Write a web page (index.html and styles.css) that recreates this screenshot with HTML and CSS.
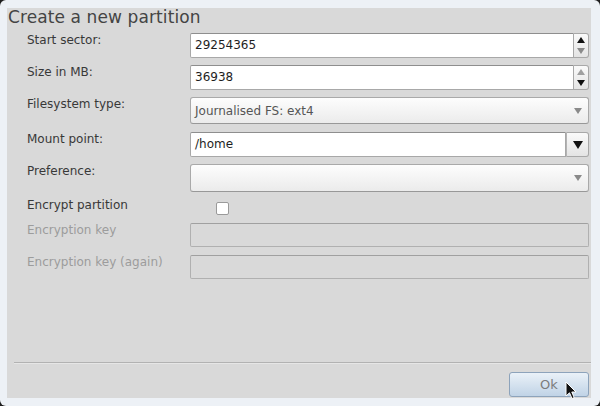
FILE: index.html
```html
<!DOCTYPE HTML>
<html lang="en">
<head>
    <meta charset="UTF-8">
    <link rel="stylesheet" href="styles.css">
    <title>Create a new partition</title>
</head>
<body>
<div class="window">
    <div class="panel">
        <h1 class="title">Create a new partition</h1>
        <div class="form">
            <div class="row">
                <label>Start sector:</label>
                <div class="field spin">
                    <span class="entry">29254365</span>
                    <span class="spinner">
                        <i class="up"></i>
                        <i class="down off"></i>
                    </span>
                </div>
            </div>
            <div class="row">
                <label>Size in MB:</label>
                <div class="field spin">
                    <span class="entry">36938</span>
                    <span class="spinner">
                        <i class="up off"></i>
                        <i class="down"></i>
                    </span>
                </div>
            </div>
            <div class="row tall">
                <label>Filesystem type:</label>
                <div class="field combo">
                    <span class="value">Journalised FS: ext4</span>
                    <i class="down off"></i>
                </div>
            </div>
            <div class="row">
                <label>Mount point:</label>
                <div class="field spin">
                    <span class="entry">/home</span>
                    <span class="drop"><i class="down big"></i></span>
                </div>
            </div>
            <div class="row taller">
                <label>Preference:</label>
                <div class="field combo">
                    <span class="value"></span>
                    <i class="down off"></i>
                </div>
            </div>
            <div class="row check">
                <label>Encrypt partition</label>
                <div><span class="checkbox"></span></div>
            </div>
            <div class="row disabled">
                <label>Encryption key</label>
                <div class="field blank"></div>
            </div>
            <div class="row disabled">
                <label>Encryption key (again)</label>
                <div class="field blank"></div>
            </div>
        </div>
        <div class="footer">
            <div class="separator"></div>
            <div class="buttons">
                <button class="ok">Ok</button>
            </div>
        </div>
    </div>
    <svg class="cursor" width="13" height="20" viewBox="0 0 13 20">
        <path d="M1 1 L1 15 L4.5 11.8 L7 17.5 L9.2 16.6 L6.8 11 L11 11 Z" fill="#111" stroke="#fff" stroke-width="1"/>
    </svg>
</div>
</body>
</html>
```

FILE: styles.css
```css
* {
    box-sizing: border-box;
}

body {
    margin: 0;
    background: #1e1e1e;
    font-family: "DejaVu Sans", sans-serif;
}

.window {
    position: relative;
    width: 600px;
    height: 406px;
    padding: 8px 9px 8px 7px;
    background: #edf1f6;
    border-radius: 6px;
}

.panel {
    display: flex;
    flex-direction: column;
    height: 390px;
    padding: 0 2px 1px 1px;
    background: #d9d9d9;
}

.title {
    margin: 0;
    font-size: 17px;
    font-weight: normal;
    line-height: 19px;
    letter-spacing: 0.1px;
    color: #444;
}

.form {
    display: flex;
    flex-direction: column;
    gap: 8px;
    margin-top: 6px;
    padding-left: 19px;
}

.row {
    display: grid;
    grid-template-columns: 163px 399px;
    height: 24px;
}

.row.tall {
    height: 27px;
}

.row.taller {
    height: 28px;
}

.row.check {
    height: 15px;
}

label {
    font-size: 12px;
    line-height: 15px;
    color: #383838;
}

.row.check label {
    margin-top: -2px;
}

.row.disabled label {
    color: #9c9c9c;
}

.field {
    display: flex;
    align-items: center;
    height: 100%;
    font-size: 12px;
    color: #1e1e1e;
}

.entry {
    flex: 1;
    height: 100%;
    padding: 4px 4px;
    line-height: 15px;
    background: #fff;
    border: 1px solid #a8a8a8;
    border-top-color: #8e8e8e;
    border-radius: 2px 0 0 2px;
}

.spinner, .drop {
    display: flex;
    flex-direction: column;
    align-items: center;
    justify-content: center;
    gap: 5px;
    width: 15px;
    height: 100%;
    background: linear-gradient(#fafafa, #e4e4e4);
    border: 1px solid #a8a8a8;
    border-left: none;
    border-radius: 0 3px 3px 0;
}

.drop {
    width: 23px;
    border-left: 1px solid #b4b4b4;
}

.up, .down {
    display: block;
    width: 0;
    height: 0;
    border-left: 4px solid transparent;
    border-right: 4px solid transparent;
}

.up {
    border-bottom: 6px solid #111;
}

.down {
    border-top: 6px solid #111;
}

.up.off {
    border-bottom-color: #a0a0a0;
}

.down.off {
    border-top-color: #8a8a8a;
}

.down.big {
    border-left-width: 5px;
    border-right-width: 5px;
    border-top-width: 8px;
}

.combo {
    justify-content: space-between;
    padding: 0 6px 0 4px;
    background: linear-gradient(#fdfdfd, #ebebeb);
    border: 1px solid #a9a9a9;
    border-bottom-color: #989898;
    border-radius: 3px;
    color: #555;
}

.checkbox {
    display: block;
    width: 13px;
    height: 13px;
    margin: 2px 0 0 26px;
    background: #fff;
    border: 1px solid #9a9a9a;
    border-radius: 2px;
}

.blank {
    background: #d9d9d9;
    border: 1px solid #b0b0b0;
    border-top-color: #a0a0a0;
    border-radius: 2px;
}

.footer {
    margin-top: auto;
}

.separator {
    height: 2px;
    margin: 0 -2px 0 6px;
    border-top: 1px solid #b2b2b2;
    border-bottom: 1px solid #e6e6e6;
}

.buttons {
    display: flex;
    justify-content: flex-end;
    margin-top: 8px;
}

.ok {
    width: 80px;
    height: 25px;
    font-family: "DejaVu Sans", sans-serif;
    font-size: 13px;
    color: #7c7c7c;
    background: linear-gradient(#eaf1f8, #c0d3e6);
    border: 1px solid #8da3bb;
    border-radius: 3px;
}

.cursor {
    position: absolute;
    left: 565px;
    top: 381px;
}
```
